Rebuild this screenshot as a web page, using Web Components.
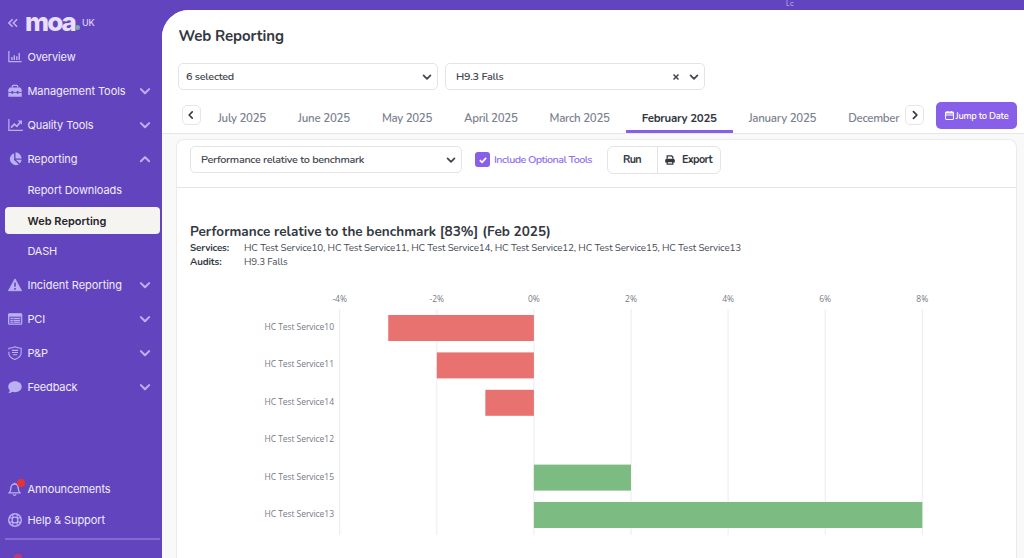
<!DOCTYPE html>
<html lang="en">
<head>
<meta charset="utf-8">
<title>Web Reporting</title>
<style>
  body {
    margin: 0;
    height: 558px;
    overflow: hidden;
    background: #6344bf;
    font-family: Nunito, Lato, "Noto Sans", sans-serif;
    color: #33383f;
  }
</style>
</head>
<body>
<moa-app>
  <moa-sidebar slot="sidebar">
    <nav-item icon="bars" label="Overview" w="48"></nav-item>
    <nav-item icon="toolbox" label="Management Tools" w="98" arrow="down"></nav-item>
    <nav-item icon="trend" label="Quality Tools" w="66" arrow="down"></nav-item>
    <nav-item icon="pie" label="Reporting" w="50" arrow="up"></nav-item>
    <nav-item sub label="Report Downloads" w="94.5"></nav-item>
    <nav-item sub active label="Web Reporting" w="79"></nav-item>
    <nav-item sub label="DASH" w="29.5"></nav-item>
    <nav-item icon="warning" label="Incident Reporting" w="94.5" arrow="down"></nav-item>
    <nav-item icon="table" label="PCI" w="17.5" arrow="down"></nav-item>
    <nav-item icon="shield" label="P&amp;P" w="20.5" arrow="down"></nav-item>
    <nav-item icon="comment" label="Feedback" w="50" arrow="down"></nav-item>
    <nav-item slot="footer" sub icon="bell" alert label="Announcements" w="83"></nav-item>
    <nav-item slot="footer" sub icon="ring" label="Help &amp; Support" w="77.5"></nav-item>
  </moa-sidebar>
  <page-header slot="header"></page-header>
  <report-card>
    <report-toolbar slot="toolbar"></report-toolbar>
    <report-summary></report-summary>
    <benchmark-chart></benchmark-chart>
  </report-card>
</moa-app>

<script>
const icons = {
  bars: '<path d="M1 1v12.2h14.5" fill="none" stroke="currentColor" stroke-width="1.4"/><path d="M4.5 8v3.5M7.2 6v5.5M10 7.2v4.3M12.8 3.5v8" stroke="currentColor" stroke-width="1.6"/>',
  toolbox: '<path d="M5 4V2.5Q5 1.5 6 1.5h4q1 0 1 1V4" fill="none" stroke="currentColor" stroke-width="1.5"/><path d="M2 4h12l1.7 2.2V9H12V8h-2v1H6V8H4v1H.3V6.2zM.3 10H4v1h2v-1h4v1h2v-1h3.7v4.5H.3z" fill="currentColor"/>',
  trend: '<path d="M1 1v13.2h16" fill="none" stroke="currentColor" stroke-width="1.4"/><path d="M3.5 11l3.7-4 3 2.5 4-5" fill="none" stroke="currentColor" stroke-width="2"/><path d="M11 2.8h5v5z" fill="currentColor"/>',
  pie: '<path d="M7 1.3V9l5.3 5.2A7 7 0 1 1 7 1.3z" fill="currentColor"/><path d="M8.6.4A7.2 7.2 0 0 1 15.6 7.3H8.6zM9 8.8h6.6a7 7 0 0 1-2.2 4.3z" fill="currentColor"/>',
  warning: '<path d="M8 1l7.5 13.5H.5z" fill="currentColor" stroke="currentColor" stroke-linejoin="round"/><path d="M8 5v5M8 11.3v2" stroke="#6344bf" stroke-width="1.8"/>',
  table: '<rect x=".7" y="2" width="15" height="12" rx="1" fill="currentColor" fill-opacity=".25" stroke="currentColor" stroke-width="1.3"/><path d="M.7 2h15v3.2H.7z" fill="currentColor"/><path d="M3 7.4h2.5m1 0h7M3 9.6h2.5m1 0h7M3 11.8h2.5m1 0h7" stroke="currentColor" stroke-width="1.2"/>',
  shield: '<path d="M1 4V2.5Q5 2 8 .8q3 1.2 7 1.7V8c0 4-3.5 6-7 7.5C5 14.5 1.5 12.5 1 9V6.5" fill="none" stroke="currentColor" stroke-width="1.2"/><path d="M4.5 5h7M4.5 7.5h7M5.5 10h5" stroke="currentColor" stroke-width="1.2"/>',
  comment: '<path d="M8 1.5c4.3 0 7.7 2.7 7.7 6.2s-3.4 6.2-7.7 6.2c-1 0-2-.2-3-.5-1.2.9-2.7 1.4-4.5 1.4 1-1 1.5-2 1.6-3C1 10.7.3 9.3.3 7.7.3 4.2 3.7 1.5 8 1.5z" fill="currentColor"/>',
  bell: '<path d="M1 12.5c2-1.5 2.3-3 2.3-5.5C3.3 4 5 2.3 7.5 2.3S11.7 4 11.7 7c0 2.5.3 4 2.3 5.5z" fill="none" stroke="currentColor" stroke-width="1.5" stroke-linejoin="round"/><path d="M5.7 14q1.8 2.6 3.6 0M7.5.8v1.5" fill="none" stroke="currentColor" stroke-width="1.4"/>',
  ring: '<circle cx="8" cy="8" r="7.2" fill="none" stroke="currentColor" stroke-width="1.6"/><circle cx="8" cy="8" r="3.3" fill="none" stroke="currentColor" stroke-width="1.5"/><path d="M5.5 1.3v4.5M10.5 1.3v4.5M5.5 10.2v4.5M10.5 10.2v4.5M1.3 5.5h4.5M1.3 10.5h4.5M10.2 5.5h4.5M10.2 10.5h4.5" stroke="currentColor" stroke-width="1.3"/>',
  down: '<path d="M2.5 5.5L8 11l5.5-5.5" fill="none" stroke="currentColor" stroke-width="2.8" stroke-linecap="round" stroke-linejoin="round"/>',
  up: '<path d="M2.5 11L8 5.5l5.5 5.5" fill="none" stroke="currentColor" stroke-width="2.8" stroke-linecap="round" stroke-linejoin="round"/>',
  left: '<path d="M10 3L5 8l5 5" fill="none" stroke="currentColor" stroke-width="2.5" stroke-linecap="round" stroke-linejoin="round"/>',
  right: '<path d="M5.5 2.5L11 8l-5.5 5.5" fill="none" stroke="currentColor" stroke-width="2.8" stroke-linecap="round" stroke-linejoin="round"/>',
  collapse: '<path d="M7.5 3L2.500 8l5 5M13.500 3l-5 5 5 5" fill="none" stroke="currentColor" stroke-width="2.200"/>',
  close: '<path d="M3 3l10 10M13 3L3 13" stroke="currentColor" stroke-width="3"/>',
  check: '<path d="M3 8.3l3.5 3.4L13 4.5" fill="none" stroke="currentColor" stroke-width="2.8"/>',
  calendar: '<rect x="1" y="2" width="14" height="13" rx="1.5" fill="none" stroke="currentColor" stroke-width="1.8"/><path d="M1 3.3h14M1 7h14M4.8 0v4M11.2 0v4" stroke="currentColor" stroke-width="2"/>',
  printer: '<path d="M3.5 6V1.5h7L12.5 3v3" fill="none" stroke="currentColor" stroke-width="2"/><path d="M2 6h12l1.7 1.5V12H12v-2H4v2H.3V7.5z" fill="currentColor"/><path d="M3.5 10.5h9v4h-9z" fill="none" stroke="currentColor" stroke-width="2"/>'
}

class MoaElement extends HTMLElement {

  constructor() {
    super()
    this.attachShadow({ mode: 'open' })
    this.shadowRoot.innerHTML = `
      <style>:host { display: block; box-sizing: border-box } * { box-sizing: border-box }</style>
      ${this.template()}
    `
  }

}

class MoaApp extends MoaElement {

  template() {
    return `
      <style>
        :host { display: flex; height: 558px }
        .side { width: 162px; flex: none }
        .content { flex: 1; min-width: 0; display: flex; flex-direction: column }
        .strip { height: 10px; flex: none; display: flex; padding-left: 624px; font: 7px/7px Inter, sans-serif; color: #bdb2ee }
        main { flex: 1; display: flex; flex-direction: column; background: #f9f9f9; border-radius: 27px 0 0 0; overflow: hidden }
      </style>
      <div class="side"><slot name="sidebar"></slot></div>
      <div class="content">
        <div class="strip">Lc</div>
        <main><slot name="header"></slot><slot></slot></main>
      </div>
    `
  }

}

class MoaSidebar extends MoaElement {

  template() {
    return `
      <style>
        :host { height: 558px; overflow: hidden; display: flex; flex-direction: column; padding: 0 2.5px 0 4.5px; font-family: Inter, sans-serif; color: #f0ecfc }
        header { height: 40px; padding: 5px 0 0 2px; display: flex; align-items: center }
        moa-icon { color: #bcb0f0 }
        .logo { margin: -2px 0 0 6.5px; font-size: 26px; font-weight: 800; line-height: 26px; color: #e7dffb }
        .dot { width: 5px; height: 5px; margin: 10px 2px 0 0; border-radius: 50%; background: #7ba6ac }
        .region { font-size: 9px; font-weight: 500; color: #ddd4f8 }
        .footer { margin-top: auto; height: 83.5px }
        hr { margin: 4.5px 0 0; border: 0; height: 2px; background: #8568d2 }
        .notice { width: 8px; height: 8px; margin: 14px 0 0 9px; border-radius: 50%; background: #c23a6a }
      </style>
      <header>
        <moa-icon name="collapse" size="12"></moa-icon>
        <fit-text class="logo" w="50">moa</fit-text>
        <span class="dot"></span>
        <fit-text class="region" w="12.5">UK</fit-text>
      </header>
      <nav><slot></slot></nav>
      <div class="footer"><slot name="footer"></slot><hr><div class="notice"></div></div>
    `
  }

}

class NavItem extends MoaElement {

  template() {
    const icon = this.getAttribute('icon')
    const arrow = this.getAttribute('arrow')
    return `
      <style>
        :host { display: flex; align-items: center; height: 34px; padding: 0 9px 0 3px; font-size: 11px; line-height: 16px; border-radius: 4px }
        :host([sub]) { height: 28px; margin-bottom: 3px }
        :host([active]) { height: 27px; background: #f5f4f0; color: #25242b; font-weight: 600 }
        .icon { width: 20px; display: flex; position: relative; color: #bcb0f5 }
        .arrow { margin-left: auto; color: #bcb0f5 }
        :host([alert]) .icon::after { content: ""; position: absolute; left: 9px; top: -3px; width: 8px; height: 8px; border-radius: 50%; background: #e3342f }
      </style>
      <span class="icon">${icon ? `<moa-icon name="${icon}" size="14"></moa-icon>` : ''}</span>
      <fit-text w="${this.getAttribute('w')}">${this.getAttribute('label').replace('&', '&amp;')}</fit-text>
      ${arrow ? `<moa-icon class="arrow" name="${arrow}" size="12"></moa-icon>` : ''}
    `
  }

}

class PageHeader extends MoaElement {

  template() {
    const months = [['July 2025', 48], ['June 2025', 52], ['May 2025', 50], ['April 2025', 53.5], ['March 2025', 60.2], ['February 2025', 75], ['January 2025', 67.5], ['December', 51]]
    return `
      <style>
        :host { height: 124px; padding: 17px 7px 0 16px; background: #fff; border-bottom: 1px solid #e6e6ea; flex: none }
        h1 { margin: 0 0 0 .5px; font-size: 15px; font-weight: 700; line-height: 18px; height: 36px }
        .filters { display: flex; gap: 7px }
        .dates { display: flex; margin-top: 12px; height: 31px; padding-left: 4px }
        .step { width: 19px; height: 20px; margin-top: 3px; flex: none; display: flex; align-items: center; justify-content: center; border: 1px solid #e6e6ea; border-radius: 5px; background: #fff }
        .step:first-child { margin-left: -.5px; margin-right: .5px }
        .months { width: 704px; padding-left: 1px; display: flex; overflow: hidden; flex: none; font-size: 11.5px; line-height: 16px; color: #7b8190; font-weight: 600 }
        .month { padding: 8px 16px 0; border-bottom: 3px solid transparent; flex: none; height: 31px }
        .month.on { color: #33383f; font-weight: 700; border-color: #875fe8 }
        .jump { display: flex; align-items: center; gap: 2px; width: 81px; height: 27px; margin-left: 12px; padding-left: 8.5px; flex: none; border-radius: 5px; background: #875fe8; color: #fff; font-size: 9.3px; font-weight: 600 }
      </style>
      <h1><fit-text w="105.5">Web Reporting</fit-text></h1>
      <div class="filters">
        <select-box style="width: 260px; --pad: 7px"><fit-text w="48">6 selected</fit-text></select-box>
        <select-box style="width: 260px; --pad: 10px" clearable><fit-text w="47.5">H9.3 Falls</fit-text></select-box>
      </div>
      <div class="dates">
        <span class="step"><moa-icon name="left" size="10"></moa-icon></span>
        <div class="months">
          ${months.map(([name, w], i) => `<div class="month ${i === 5 ? 'on' : ''}"><fit-text w="${w}">${name}</fit-text></div>`).join('')}
        </div>
        <span class="step"><moa-icon name="right" size="10"></moa-icon></span>
        <div class="jump"><moa-icon name="calendar" size="9"></moa-icon><fit-text w="53">Jump to Date</fit-text></div>
      </div>
    `
  }

}

class SelectBox extends MoaElement {

  template() {
    return `
      <style>
        :host { display: flex; align-items: center; gap: 9.5px; height: 27px; padding: 0 5px 0 var(--pad, 10px); border: 1px solid #e3e3e8; border-radius: 5px; background: #fff; font-size: 10.8px; line-height: 14px; font-weight: 600; color: #41464e }
        .value { flex: 1; display: flex }
      </style>
      <span class="value"><slot></slot></span>
      ${this.hasAttribute('clearable') ? '<moa-icon name="close" size="8"></moa-icon>' : ''}
      <moa-icon name="down" size="10"></moa-icon>
    `
  }

}

class ReportCard extends MoaElement {

  template() {
    return `
      <style>
        :host { flex: 1; margin: 5px 7px 0 14px; border: 1px solid #ebebee; border-bottom: 0; border-radius: 8px 8px 0 0; background: #fff }
      </style>
      <slot name="toolbar"></slot>
      <slot></slot>
    `
  }

}

class ReportToolbar extends MoaElement {

  template() {
    return `
      <style>
        :host { display: flex; height: 48px; padding: 6px 0 0 13px; border-bottom: 1px solid #e3e3e8; align-items: flex-start; font-size: 10.8px; line-height: 14px }
        .optional { display: flex; align-items: center; height: 27px; margin-left: 13px; gap: 4px; color: #9070ec; font-weight: 600 }
        .box { width: 15px; height: 15px; display: flex; align-items: center; justify-content: center; border-radius: 3px; background: #875fe8; color: #fff }
        .buttons { display: flex; width: 114px; height: 28px; margin: 0 0 0 14.5px; border: 1px solid #e3e3e8; border-radius: 6px; font-weight: 700 }
        .buttons span { display: flex; align-items: center; justify-content: center; width: 49px }
        .buttons span + span { flex: 1; gap: 7px; border-left: 1px solid #e3e3e8 }
      </style>
      <select-box style="width: 272px"><fit-text w="163">Performance relative to benchmark</fit-text></select-box>
      <div class="optional"><span class="box"><moa-icon name="check" size="10"></moa-icon></span><fit-text w="98">Include Optional Tools</fit-text></div>
      <div class="buttons">
        <span><fit-text w="18">Run</fit-text></span>
        <span><moa-icon name="printer" size="10"></moa-icon><fit-text w="30">Export</fit-text></span>
      </div>
    `
  }

}

class ReportSummary extends MoaElement {

  template() {
    return `
      <style>
        :host { padding: 35px 0 0 13px; font-size: 9.8px; line-height: 14px }
        h2 { margin: 0; font-size: 13.5px; font-weight: 700; line-height: 18px; height: 18px }
        dl { margin: 0; display: grid; grid-template-columns: 54px 1fr }
        dt { font-weight: 700; height: 13.5px }
        dd { margin: 0; height: 13.5px; color: #454a53 }
      </style>
      <h2><fit-text w="361">Performance relative to the benchmark [83%] (Feb 2025)</fit-text></h2>
      <dl>
        <dt><fit-text w="39">Services:</fit-text></dt>
        <dd><fit-text w="497">HC Test Service10, HC Test Service11, HC Test Service14, HC Test Service12, HC Test Service15, HC Test Service13</fit-text></dd>
        <dt><fit-text w="31.5">Audits:</fit-text></dt>
        <dd><fit-text w="43.5">H9.3 Falls</fit-text></dd>
      </dl>
    `
  }

}

class BenchmarkChart extends MoaElement {

  template() {
    const data = [['HC Test Service10', -3], ['HC Test Service11', -2], ['HC Test Service14', -1], ['HC Test Service12', 0], ['HC Test Service15', 2], ['HC Test Service13', 8]]
    const zero = 356.9
    const unit = 48.55
    const ticks = [-4, -2, 0, 2, 4, 6, 8].map(tick => {
      const x = zero + tick * unit
      return `<path d="M${x} 40v226" stroke="#ebebf3"/><text x="${x}" y="33" text-anchor="middle">${tick}%</text>`
    })
    const rows = data.map(([name, value], i) => {
      const y = 46 + i * 37.4
      const x = zero + Math.min(value, 0) * unit
      const fill = value < 0 ? '#e7726f' : '#7cbc82'
      return `<text x="87.5" y="${y + 15}" textLength="69.5">${name}</text>` +
        (value ? `<rect x="${x}" y="${y}" width="${Math.abs(value) * unit}" height="26" fill="${fill}"/>` : '')
    })
    return `
      <style>
        svg { display: block; margin-top: 1px; font: 8.5px "Segoe UI", "Open Sans", sans-serif; fill: #777a84 }
      </style>
      <svg width="838" height="280">${ticks.join('')}${rows.join('')}</svg>
    `
  }

}

class MoaIcon extends MoaElement {

  template() {
    const size = this.getAttribute('size')
    return `
      <style>:host { flex: none } svg { display: block; overflow: visible }</style>
      <svg width="${size}" height="${size}" viewBox="0 0 16 16">${icons[this.getAttribute('name')]}</svg>
    `
  }

}

// Tracks its text so that it fills exactly w pixels, whichever font is used
class FitText extends MoaElement {

  template() {
    return `
      <style>:host { display: inline-block; white-space: nowrap; vertical-align: top }</style>
      <slot></slot>
    `
  }

  connectedCallback() {
    const w = Number(this.getAttribute('w'))
    const range = document.createRange()
    range.selectNodeContents(this)
    const natural = range.getBoundingClientRect().width
    if (natural) {
      this.style.letterSpacing = `${(w - natural) / this.textContent.length}px`
    }
    this.style.width = `${w}px`
  }

}

customElements.define('moa-app', MoaApp)
customElements.define('moa-sidebar', MoaSidebar)
customElements.define('page-header', PageHeader)
customElements.define('report-card', ReportCard)
customElements.define('report-toolbar', ReportToolbar)
customElements.define('report-summary', ReportSummary)
customElements.define('benchmark-chart', BenchmarkChart)
customElements.define('nav-item', NavItem)
customElements.define('select-box', SelectBox)
customElements.define('moa-icon', MoaIcon)
customElements.define('fit-text', FitText)
</script>
</body>
</html>
